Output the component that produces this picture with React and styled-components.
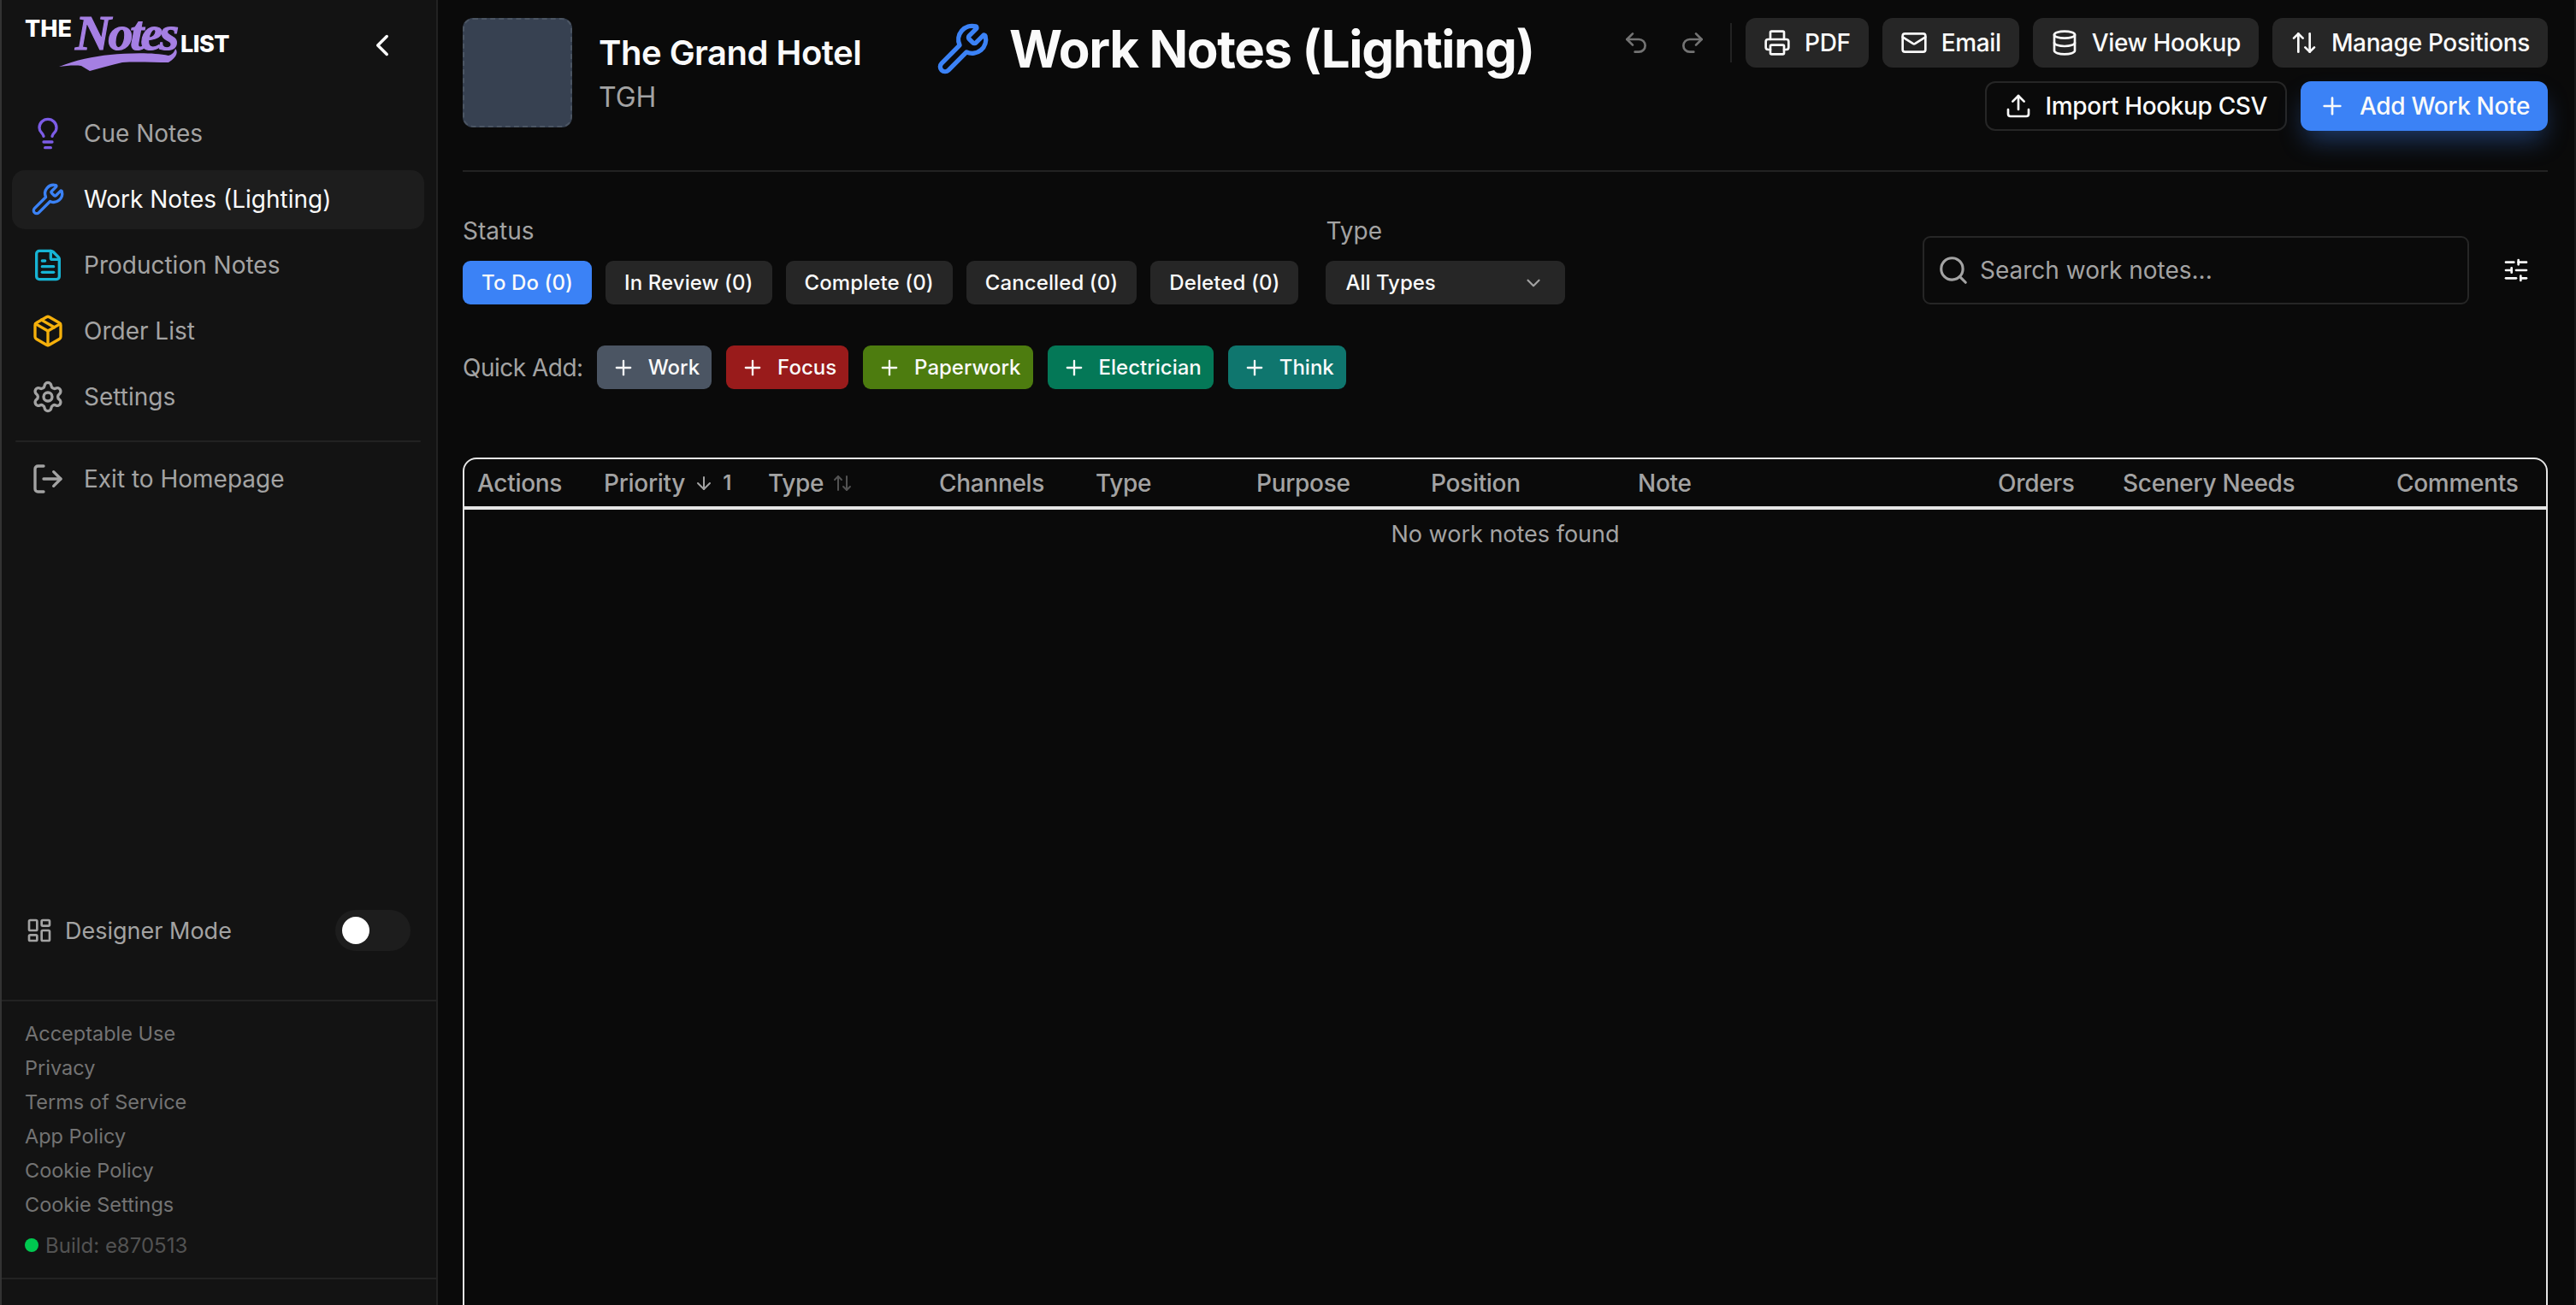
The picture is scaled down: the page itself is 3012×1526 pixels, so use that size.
import styled, {createGlobalStyle} from 'styled-components';
import {
  ArrowDown, ArrowUpDown, ChevronDown, ChevronLeft, Database, FileText, Lightbulb, LayoutDashboard,
  LogOut, Mail, Package, Plus, Printer, Redo2, Search, Settings, SlidersHorizontal, Undo2, Upload, Wrench,
} from 'lucide-react';

const GlobalStyle = createGlobalStyle`
  * { box-sizing: border-box; }
  html, body { margin: 0; height: 100%; background: #0a0a0a; overflow: hidden; }
  body { font-family: Inter, "Liberation Sans", sans-serif; color: #fafafa; }
  #root { height: 100%; }
`

const Page = styled.div`
  display: flex;
  height: 1526px;
  width: 3012px;
  border-left: 2px solid #333;
  border-right: 2px solid #161616;
`

/* sidebar */
const Sidebar = styled.aside`
  width: 510px;
  flex: none;
  display: flex;
  flex-direction: column;
  background: #131313;
  border-right: 2px solid #222;
`
const Brand = styled.div`
  height: 108px;
  display: flex;
  align-items: flex-start;
  justify-content: space-between;
  padding: 6px 42px 0 27px;
`
const CollapseButton = styled.button`
  border: none;
  background: transparent;
  color: #fafafa;
  padding: 0;
  margin-top: 26px;
  display: flex;
`
const Nav = styled.nav`
  display: flex;
  flex-direction: column;
  gap: 8px;
  padding: 14px 14px 0 12px;
`
const NavItem = styled.a`
  height: 68.8px;
  display: flex;
  align-items: center;
  gap: 22px;
  padding: 0 24px 0 22px;
  border-radius: 15px;
  font-size: 28px;
  font-weight: 400;
  color: ${p => (p.$active ? '#fafafa' : '#a3a3a3')};
  background: ${p => (p.$active ? '#1d1d1d' : 'transparent')};
  svg { color: ${p => p.$tint || '#a3a3a3'}; flex: none; }
`
const NavRule = styled.div`
  height: 2px;
  margin: 9.5px 4px 0;
  background: #222;
  border-radius: 2px;
`
const Spacer = styled.div`
  flex: 1;
`
const DesignerRow = styled.div`
  display: flex;
  align-items: center;
  justify-content: space-between;
  height: 48px;
  padding: 0 30px 0 28px;
  margin-bottom: 57px;
`
const DesignerLabel = styled.span`
  display: flex;
  align-items: center;
  gap: 14px;
  font-size: 27px;
  color: #a3a3a3;
`
const Toggle = styled.span`
  width: 88px;
  height: 48px;
  border-radius: 24px;
  background: #1d1d1d;
  padding: 8px;
  display: flex;
`
const Knob = styled.span`
  width: 32px;
  height: 32px;
  border-radius: 50%;
  background: #fff;
`
const Legal = styled.div`
  border-top: 2px solid #222;
  border-bottom: 2px solid #222;
  padding: 18px 27px 18px;
  display: flex;
  flex-direction: column;
  margin-bottom: 30px;
`
const LegalLink = styled.a`
  height: 40px;
  line-height: 40px;
  font-size: 23.5px;
  color: #737373;
`
const Build = styled.div`
  display: flex;
  align-items: center;
  gap: 8px;
  height: 40px;
  margin-top: 7px;
  font-size: 24px;
  color: #525252;
`
const Dot = styled.span`
  width: 16px;
  height: 16px;
  border-radius: 50%;
  background: #00c950;
`

/* main */
const Main = styled.main`
  flex: 1;
  min-width: 0;
  padding: 0 31px 0 29px;
  display: flex;
  flex-direction: column;
  overflow: hidden;
`
const Header = styled.header`
  height: 201px;
  flex: none;
  display: flex;
  padding-top: 21px;
  border-bottom: 2px solid #222;
`
const Avatar = styled.div`
  width: 128px;
  height: 128px;
  border-radius: 12px;
  background: #374151;
  border: 2px dashed #4b5563;
  flex: none;
`
const Project = styled.div`
  margin-left: 31px;
  padding-top: 17px;
  width: 394px;
  flex: none;
`
const ProjectName = styled.div`
  font-size: 40px;
  line-height: 48px;
  font-weight: 600;
  letter-spacing: -0.5px;
`
const ProjectCode = styled.div`
  font-size: 32px;
  line-height: 40px;
  margin-top: 8px;
  color: #a3a3a3;
`
const TitleBlock = styled.div`
  display: flex;
  align-items: center;
  gap: 22px;
  height: 68px;
  margin-top: 2px;
  svg { color: #3b82f6; flex: none; }
`
const Title = styled.h1`
  margin: 0;
  font-size: 60px;
  line-height: 68px;
  font-weight: 700;
  letter-spacing: -1.4px;
  white-space: nowrap;
`
const Actions = styled.div`
  margin-left: auto;
  display: flex;
  flex-direction: column;
  align-items: flex-end;
  gap: 16px;
`
const ActionRow = styled.div`
  display: flex;
  align-items: center;
  gap: 16px;
`
const GhostIcon = styled.span`
  display: flex;
  width: 48px;
  justify-content: center;
  color: #737373;
  margin-right: ${p => p.$gap || 0}px;
`
const ActionRule = styled.span`
  width: 2px;
  height: 46px;
  background: #222;
`
const Button = styled.button`
  height: 58px;
  display: flex;
  align-items: center;
  gap: ${p => p.$gap || 16}px;
  padding: 0 21px;
  font: 500 28px Inter, sans-serif;
  letter-spacing: -0.35px;
  color: #fafafa;
  white-space: nowrap;
  border-radius: 12px;
  border: ${p => (p.$outline ? '2px solid #262626' : 'none')};
  background: ${p => (p.$primary ? '#3b82f6' : p.$outline ? '#0a0a0a' : '#262626')};
  box-shadow: ${p => (p.$primary ? '0 16px 30px -6px rgba(59,130,246,0.4)' : 'none')};
`
const FilterRow = styled.section`
  display: flex;
  align-items: flex-end;
  margin-top: 51px;
`
const Field = styled.div`
  display: flex;
  flex-direction: column;
  gap: 17px;
  margin-right: ${p => p.$gap || 0}px;
`
const FieldLabel = styled.label`
  font-size: 28px;
  line-height: 36px;
  color: #a3a3a3;
`
const Chips = styled.div`
  display: flex;
  gap: 16px;
`
const Chip = styled.button`
  height: 51px;
  padding: 0 22px;
  border: none;
  border-radius: 9px;
  font: 500 24px Inter, sans-serif;
  letter-spacing: 0.1px;
  color: #fafafa;
  white-space: nowrap;
  background: ${p => (p.$active ? '#3b82f6' : '#262626')};
`
const SelectBox = styled.div`
  width: 280px;
  height: 51px;
  padding: 0 24px 0 23px;
  border-radius: 9px;
  display: flex;
  align-items: center;
  justify-content: space-between;
  font: 500 24px Inter, sans-serif;
  background: #262626;
  svg { color: #a3a3a3; }
`
const SearchBox = styled.div`
  margin-left: auto;
  width: 639px;
  height: 80px;
  padding: 0 15px;
  border: 2px solid #262626;
  border-radius: 9px;
  display: flex;
  align-items: center;
  gap: 12px;
  font-size: 28px;
  color: #a3a3a3;
`
const SliderButton = styled.span`
  width: 92px;
  height: 80px;
  flex: none;
  display: flex;
  align-items: center;
  justify-content: flex-end;
  padding-right: 21px;
  color: #fafafa;
`
const QuickRow = styled.section`
  display: flex;
  align-items: center;
  gap: 17px;
  margin-top: 48px;
`
const QuickLabel = styled.span`
  font-size: 28px;
  letter-spacing: -0.5px;
  color: #a3a3a3;
  margin-right: -1px;
`
const QuickChip = styled.button`
  height: 51px;
  display: flex;
  align-items: center;
  gap: 15px;
  padding: 0 14px 0 17px;
  border: none;
  border-radius: 9px;
  font: 500 24px Inter, sans-serif;
  color: #fafafa;
  background: ${p => p.$bg};
`
const Table = styled.div`
  margin-top: 80px;
  flex: none;
  height: 1100px;
  border: 2px solid #e5e5e5;
  border-radius: 16px 16px 0 0;
`
const HeadRow = styled.div`
  display: grid;
  grid-template-columns: 148px 192px 200px 183px 188px 204px 242px 421px 146px 320px 191px;
  height: 59px;
  align-items: center;
  border-bottom: 4px solid #e5e5e5;
`
const HeadCell = styled.div`
  display: flex;
  align-items: center;
  gap: 10px;
  padding-left: 15px;
  font-size: 28px;
  font-weight: 500;
  letter-spacing: -0.3px;
  color: #a3a3a3;
  white-space: nowrap;
`
const SortMark = styled.span`
  display: flex;
  align-items: center;
  font-size: 24px;
  font-weight: 600;
  gap: 10px;
  color: ${p => p.$dim ? '#525252' : '#a3a3a3'};
`
const Empty = styled.div`
  text-align: center;
  font-size: 27px;
  line-height: 34px;
  padding-top: 12px;
  color: #a3a3a3;
`

const Logo = () => (
  <svg width="250" height="90" viewBox="0 0 250 90" role="img" aria-label="The Notes List">
    <text x="0" y="37" fill="#fff" fontFamily="Inter" fontWeight="800" fontSize="27">THE</text>
    <text x="59" y="52" fill="#a57fe3" stroke="#a57fe3" strokeWidth="1.2" fontFamily="Liberation Serif" fontWeight="700" fontStyle="italic" fontSize="58" letterSpacing="-3.5">Notes</text>
    <text x="182" y="55" fill="#fff" fontFamily="Inter" fontWeight="800" fontSize="27" letterSpacing="-0.5">LIST</text>
    <path d="M40 72 C 60 64 80 60 100 58 C 120 56 150 55 168 59 C 172 58 175 55 176 51 C 179 54 179 60 168 67 C 150 67 130 66 114 67 C 100 70 88 74 76 77 L 66 71 C 58 70 48 71 40 72 Z" fill="#a57fe3" />
  </svg>
)

const navItems = [
  {label: 'Cue Notes', icon: Lightbulb, tint: '#7c5ce6'},
  {label: 'Work Notes (Lighting)', icon: Wrench, tint: '#3b82f6', active: true},
  {label: 'Production Notes', icon: FileText, tint: '#17b4d4'},
  {label: 'Order List', icon: Package, tint: '#f5b00b'},
  {label: 'Settings', icon: Settings},
]
const legalLinks = ['Acceptable Use', 'Privacy', 'Terms of Service', 'App Policy', 'Cookie Policy', 'Cookie Settings']
const statuses = ['To Do (0)', 'In Review (0)', 'Complete (0)', 'Cancelled (0)', 'Deleted (0)']
const quickAdd = [
  {label: 'Work', bg: '#4b5563'},
  {label: 'Focus', bg: '#991b1b'},
  {label: 'Paperwork', bg: '#4d7c0f'},
  {label: 'Electrician', bg: '#047857'},
  {label: 'Think', bg: '#0f766e'},
]

const App = () => {
  return (
    <>
      <GlobalStyle />
      <Page>
        <Sidebar>
          <Brand>
            <Logo />
            <CollapseButton type="button"><ChevronLeft size={42} strokeWidth={2} /></CollapseButton>
          </Brand>
          <Nav>
            {navItems.map(item => (
              <NavItem key={item.label} $active={item.active} $tint={item.tint}>
                <item.icon size={40} strokeWidth={2} />
                {item.label}
              </NavItem>
            ))}
            <NavRule />
            <NavItem>
              <LogOut size={40} strokeWidth={2} />
              Exit to Homepage
            </NavItem>
          </Nav>
          <Spacer />
          <DesignerRow>
            <DesignerLabel>
              <LayoutDashboard size={32} strokeWidth={2} />
              Designer Mode
            </DesignerLabel>
            <Toggle><Knob /></Toggle>
          </DesignerRow>
          <Legal>
            {legalLinks.map(link => <LegalLink key={link}>{link}</LegalLink>)}
            <Build><Dot />Build: e870513</Build>
          </Legal>
        </Sidebar>
        <Main>
          <Header>
            <Avatar />
            <Project>
              <ProjectName>The Grand Hotel</ProjectName>
              <ProjectCode>TGH</ProjectCode>
            </Project>
            <TitleBlock>
              <Wrench size={64} strokeWidth={2} />
              <Title>Work Notes (Lighting)</Title>
            </TitleBlock>
            <Actions>
              <ActionRow>
                <GhostIcon $gap={2}><Undo2 size={32} strokeWidth={2} /></GhostIcon>
                <GhostIcon $gap={4}><Redo2 size={32} strokeWidth={2} /></GhostIcon>
                <ActionRule />
                <Button><Printer size={32} strokeWidth={2} />PDF</Button>
                <Button><Mail size={32} strokeWidth={2} />Email</Button>
                <Button><Database size={32} strokeWidth={2} />View Hookup</Button>
                <Button><ArrowUpDown size={32} strokeWidth={2} />Manage Positions</Button>
              </ActionRow>
              <ActionRow>
                <Button $outline><Upload size={32} strokeWidth={2} />Import Hookup CSV</Button>
                <Button $primary><Plus size={32} strokeWidth={2} />Add Work Note</Button>
              </ActionRow>
            </Actions>
          </Header>
          <FilterRow>
            <Field $gap={32}>
              <FieldLabel>Status</FieldLabel>
              <Chips>
                {statuses.map((status, i) => <Chip key={status} $active={i === 0}>{status}</Chip>)}
              </Chips>
            </Field>
            <Field>
              <FieldLabel>Type</FieldLabel>
              <SelectBox>All Types<ChevronDown size={26} strokeWidth={2} /></SelectBox>
            </Field>
            <SearchBox><Search size={38} strokeWidth={2} />Search work notes...</SearchBox>
            <SliderButton><SlidersHorizontal size={32} strokeWidth={2} /></SliderButton>
          </FilterRow>
          <QuickRow>
            <QuickLabel>Quick Add:</QuickLabel>
            {quickAdd.map(chip => (
              <QuickChip key={chip.label} $bg={chip.bg}><Plus size={28} strokeWidth={2} />{chip.label}</QuickChip>
            ))}
          </QuickRow>
          <Table>
            <HeadRow>
              <HeadCell>Actions</HeadCell>
              <HeadCell>Priority<SortMark><ArrowDown size={24} strokeWidth={2} />1</SortMark></HeadCell>
              <HeadCell>Type<SortMark $dim><ArrowUpDown size={24} strokeWidth={2} /></SortMark></HeadCell>
              <HeadCell>Channels</HeadCell>
              <HeadCell>Type</HeadCell>
              <HeadCell>Purpose</HeadCell>
              <HeadCell>Position</HeadCell>
              <HeadCell>Note</HeadCell>
              <HeadCell>Orders</HeadCell>
              <HeadCell>Scenery Needs</HeadCell>
              <HeadCell>Comments</HeadCell>
            </HeadRow>
            <Empty>No work notes found</Empty>
          </Table>
        </Main>
      </Page>
    </>
  )
}

export default App;
